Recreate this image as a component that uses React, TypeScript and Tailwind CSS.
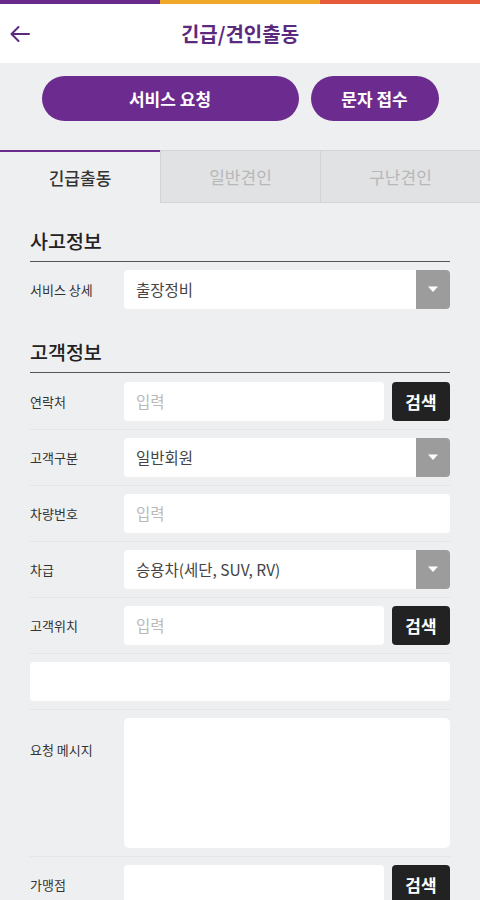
import React from 'react'

const font = { fontFamily: '"Noto Sans CJK KR", "Noto Sans", sans-serif' }

function Caret() {
  return (
    <div className="w-[34px] self-stretch bg-[#9c9c9c] rounded-r-[4px] flex items-center justify-center">
      <svg width="12" height="7" viewBox="0 0 12 7">
        <path d="M1 0.5 L11 0.5 L6 6 Z" fill="#ffffff" />
      </svg>
    </div>
  )
}

function SelectBox({ value }: { value: string }) {
  return (
    <div className="flex-1 h-[39px] bg-white rounded-[4px] flex items-center">
      <span className="flex-1 pl-3 text-[15.5px] text-[#444]">{value}</span>
      <Caret />
    </div>
  )
}

function InputBox({ placeholder, search }: { placeholder?: string; search?: boolean }) {
  return (
    <div className="flex-1 flex items-center gap-2">
      <div className="flex-1 h-[39px] bg-white rounded-[4px] flex items-center pl-3 text-[15.5px] text-[#b9b9b9]">
        {placeholder}
      </div>
      {search && (
        <button className="w-[58px] h-[39px] bg-[#222222] rounded-[4px] text-white text-[17px] font-bold">
          검색
        </button>
      )}
    </div>
  )
}

function Row({ label, children, last }: { label: string; children: React.ReactNode; last?: boolean }) {
  return (
    <div className={`flex items-center py-2 ${last ? '' : 'border-b border-[#e4e5e7]'}`}>
      <div className="w-[94px] text-[13px] text-[#333]">{label}</div>
      {children}
    </div>
  )
}

export default function App() {
  return (
    <div className="w-[480px] h-[900px] overflow-hidden bg-[#eeeff1]" style={font}>
      {/* color strip */}
      <div className="flex h-[4px]">
        <div className="flex-1 bg-[#6a2a8c]" />
        <div className="flex-1 bg-[#f0a828]" />
        <div className="flex-1 bg-[#e65a3a]" />
      </div>

      {/* header */}
      <div className="h-[59px] bg-white flex items-center">
        <div className="w-[46px] pl-[9px]">
          <svg width="22" height="18" viewBox="0 0 22 18" fill="none">
            <path d="M20 9 H3 M9.5 2 L2.5 9 L9.5 16" stroke="#5b2a7e" strokeWidth="2" strokeLinecap="round" strokeLinejoin="round" />
          </svg>
        </div>
        <div className="flex-1 text-center text-[20px] font-bold text-[#5b2a7e]">긴급/견인출동</div>
        <div className="w-[46px]" />
      </div>

      {/* action buttons */}
      <div className="flex justify-center gap-3 pt-[13px] pb-[29px]">
        <button className="w-[257px] h-[45px] rounded-full bg-[#6c2b8e] text-white text-[17px] font-bold">서비스 요청</button>
        <button className="w-[128px] h-[45px] rounded-full bg-[#6c2b8e] text-white text-[17px] font-bold">문자 접수</button>
      </div>

      {/* tabs */}
      <div className="flex h-[53px]">
        <div className="w-[160px] border-t-2 border-[#6a2a8c] flex items-center justify-center text-[17px] font-medium text-[#333]">긴급출동</div>
        <div className="w-[160px] bg-[#e1e2e4] border-t border-l border-b border-[#d3d4d6] flex items-center justify-center text-[17px] text-[#b8b8b8]">일반견인</div>
        <div className="w-[160px] bg-[#e1e2e4] border-t border-l border-b border-[#d3d4d6] flex items-center justify-center text-[17px] text-[#b8b8b8]">구난견인</div>
      </div>

      <div className="px-[30px]">
        <div className="pt-[25px] pb-[8px] border-b-[1.5px] border-[#555] text-[19.5px] font-medium text-[#222] leading-[25px]">사고정보</div>
        <Row label="서비스 상세" last>
          <SelectBox value="출장정비" />
        </Row>

        <div className="pt-[22px] pb-[8px] border-b-[1.5px] border-[#555] text-[19.5px] font-medium text-[#222] leading-[25px]">고객정보</div>
        <div className="pt-[1px]" />
        <Row label="연락처">
          <InputBox placeholder="입력" search />
        </Row>
        <Row label="고객구분">
          <SelectBox value="일반회원" />
        </Row>
        <Row label="차량번호">
          <InputBox placeholder="입력" />
        </Row>
        <Row label="차급">
          <SelectBox value="승용차(세단, SUV, RV)" />
        </Row>
        <Row label="고객위치">
          <InputBox placeholder="입력" search />
        </Row>
        <div className="py-2 border-b border-[#e4e5e7]">
          <div className="h-[39px] bg-white rounded-[4px]" />
        </div>
        <div className="flex items-start py-2 border-b border-[#e4e5e7]">
          <div className="w-[94px] pt-[22px] text-[13px] text-[#333]">요청 메시지</div>
          <div className="flex-1 h-[130px] bg-white rounded-[5px]" />
        </div>
        <Row label="가맹점">
          <InputBox search />
        </Row>
      </div>
    </div>
  )
}
